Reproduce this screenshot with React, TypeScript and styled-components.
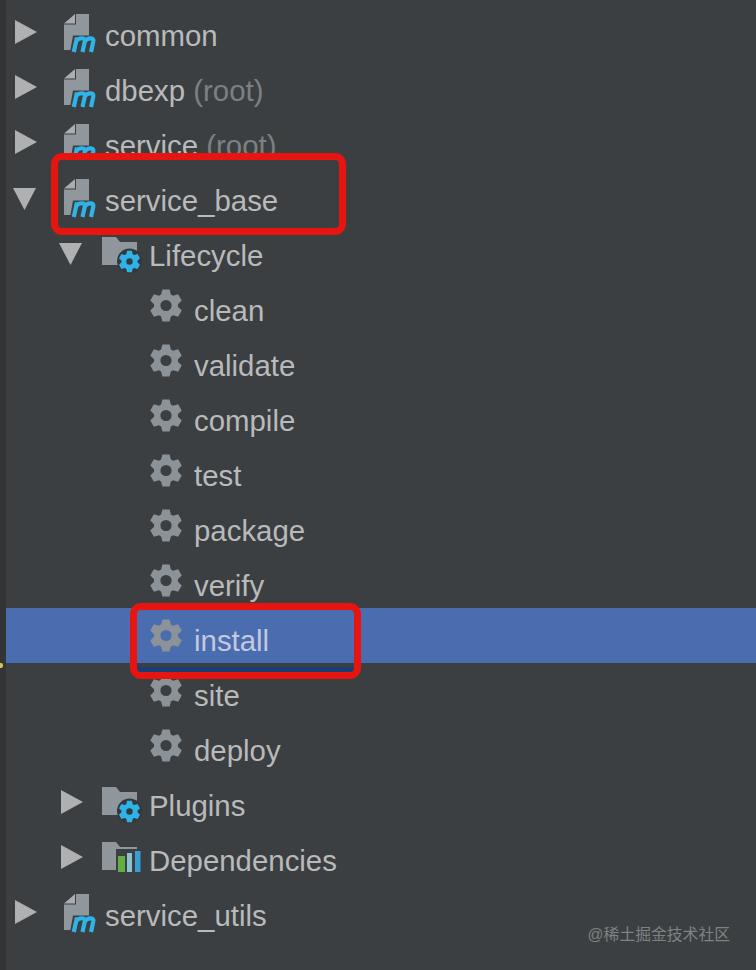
import React from "react";
import styled, { createGlobalStyle } from "styled-components";

const Global = createGlobalStyle`
  html, body { margin: 0; padding: 0; background: #3c3f41; }
  body { width: 756px; height: 970px; overflow: hidden; }
`;

const Page = styled.div`
  position: relative;
  display: flex;
  width: 756px;
  height: 970px;
  overflow: hidden;
  background: #3c3f41;
  font-family: "Liberation Sans", Arial, sans-serif;
`;

const Gutter = styled.div`
  position: relative;
  flex: 0 0 6px;
  background: #323436;
`;

const CaretMark = styled.span`
  position: absolute;
  left: 0;
  top: 663px;
  width: 3px;
  height: 5px;
  border-radius: 0 2px 2px 0;
  background: #d8c25a;
`;

const Tree = styled.div`
  flex: 1;
  display: flex;
  flex-direction: column;
  padding-top: 3px;
`;

const Row = styled.div<{ $indent: number; $selected?: boolean }>`
  position: relative;
  display: flex;
  align-items: center;
  flex: 0 0 55px;
  height: 55px;
  padding-left: ${(p) => p.$indent}px;
  background: ${(p) => (p.$selected ? "#4a6db0" : "transparent")};
`;

const BoxedRow = styled(Row)`
  z-index: 1;
  &::before {
    content: "";
    position: absolute;
    z-index: -1;
    box-sizing: border-box;
    border: 7px solid #e8140f;
    border-radius: 11px;
  }
`;

const ModuleBox = styled(BoxedRow)`
  &::before {
    left: 45px;
    top: -15px;
    width: 295px;
    height: 82px;
    background: #3c3f41;
  }
`;

const SelectedBox = styled(BoxedRow)`
  &::before {
    left: 124px;
    top: -5px;
    width: 231px;
    height: 76px;
    background: linear-gradient(transparent calc(100% - 5px), #163f78 0) padding-box;
  }
`;

const Arrow = styled.svg`
  flex: 0 0 auto;
  display: block;
  width: 24px;
  height: 26px;
  margin-top: 3px;
`;

const IconSlot = styled.div<{ $left: number; $width: number; $drop: number }>`
  flex: 0 0 ${(p) => p.$width}px;
  margin-left: ${(p) => p.$left}px;
  margin-top: ${(p) => p.$drop}px;
  display: flex;
  align-items: center;
  justify-content: flex-start;
`;

const IconSvg = styled.svg`
  display: block;
  overflow: visible;
`;

const Label = styled.span<{ $gap: number; $selected?: boolean }>`
  margin-left: ${(p) => p.$gap}px;
  padding-top: 11px;
  font-size: 29.4px;
  line-height: 36px;
  white-space: nowrap;
  color: ${(p) => (p.$selected ? "#c3c8dc" : "#b8babb")};
`;

const Muted = styled.span`
  color: #7d8082;
`;

const Watermark = styled.div`
  position: absolute;
  right: 26px;
  top: 923px;
  font-family: "Liberation Sans", "Noto Sans CJK SC", sans-serif;
  font-size: 15.8px;
  line-height: 24px;
  color: #7f8284;
`;

function gearPath(cx: number, cy: number, rOut: number, rIn: number, rHole: number) {
  const pts: string[] = [];
  for (let i = 0; i < 6; i++) {
    const a = ((i * 60 - 90) * Math.PI) / 180;
    const offsets: [number, number][] = [
      [rIn, -0.42],
      [rOut, -0.22],
      [rOut, 0.22],
      [rIn, 0.42],
    ];
    for (const [r, d] of offsets) {
      pts.push(`${(cx + r * Math.cos(a + d)).toFixed(2)} ${(cy + r * Math.sin(a + d)).toFixed(2)}`);
    }
  }
  const hole = `M${cx - rHole} ${cy}a${rHole} ${rHole} 0 1 0 ${rHole * 2} 0a${rHole} ${rHole} 0 1 0 ${-rHole * 2} 0Z`;
  return `M${pts.join("L")}Z${hole}`;
}

const ArrowRight = () => (
  <Arrow viewBox="0 0 24 26">
    <path d="M0 1L22 13L0 25Z" fill="#aeb0b2" />
  </Arrow>
);

const ArrowDown = () => (
  <Arrow viewBox="0 0 24 26">
    <path d="M0 4L23 4L11.5 26Z" fill="#aeb0b2" />
  </Arrow>
);

const MavenIcon = () => (
  <IconSvg width="33" height="38" viewBox="0 0 33 38">
    <path d="M12 0H25V36H0V10.5H12Z" fill="#90989e" />
    <path d="M0 9.5L11 0V9.5Z" fill="#a9aeb1" />
    <path d="M9 21.5H33V38H6Z" fill="#3c3f41" />
    <path
      d="M9.8 38L13 23.5M12.4 27C14.5 23.5 22 23 20.8 27.5L18.5 38M20.8 27.5C23 23.5 30.5 23 29.3 27.5L27 38"
      fill="none"
      stroke="#2fb4ea"
      strokeWidth="4.2"
    />
  </IconSvg>
);

const Folder = () => <path d="M0 0H14L18 5H35V28H0Z" fill="#8f979d" />;

const FolderGearIcon = () => (
  <IconSvg width="38" height="36" viewBox="0 0 38 36">
    <Folder />
    <circle cx="27.5" cy="24" r="12.5" fill="#34383b" />
    <path d={gearPath(27.5, 24.5, 11, 8, 3.2)} fill="#2fb2e8" fillRule="evenodd" />
  </IconSvg>
);

const FolderChartIcon = () => (
  <IconSvg width="38" height="36" viewBox="0 0 38 36">
    <Folder />
    <path d="M14 7H38V36H14Z" fill="#3c3f41" />
    <rect x="16" y="14" width="7" height="16" fill="#5fb03f" />
    <rect x="25" y="11" width="5" height="19" fill="#8fbfd0" />
    <rect x="33" y="9" width="5.5" height="21" fill="#389fd6" />
  </IconSvg>
);

const GearIcon = () => (
  <IconSvg width="32" height="33" viewBox="0 0 32 33">
    <path d={gearPath(16, 16.5, 16.5, 12, 5.6)} fill="#8b9399" fillRule="evenodd" />
  </IconSvg>
);

const Module = ({ open, name, note }: { open?: boolean; name: string; note?: string }) => (
  <>
    {open ? <ArrowDown /> : <ArrowRight />}
    <IconSlot $left={open ? 27 : 25} $width={33} $drop={5}>
      <MavenIcon />
    </IconSlot>
    <Label $gap={8}>
      {name}
      {note ? <Muted> {note}</Muted> : null}
    </Label>
  </>
);

const Group = ({ open, name, chart }: { open?: boolean; name: string; chart?: boolean }) => (
  <>
    {open ? <ArrowDown /> : <ArrowRight />}
    <IconSlot $left={open ? 19 : 17} $width={38} $drop={9}>
      {chart ? <FolderChartIcon /> : <FolderGearIcon />}
    </IconSlot>
    <Label $gap={9}>{name}</Label>
  </>
);

const Goal = ({ name, selected }: { name: string; selected?: boolean }) => (
  <>
    <IconSlot $left={0} $width={32} $drop={0}>
      <GearIcon />
    </IconSlot>
    <Label $gap={12} $selected={selected}>
      {name}
    </Label>
  </>
);

export default function App() {
  return (
    <Page>
      <Global />
      <Gutter>
        <CaretMark />
      </Gutter>
      <Tree>
        <Row $indent={9}><Module name="common" /></Row>
        <Row $indent={9}><Module name="dbexp" note="(root)" /></Row>
        <Row $indent={9}><Module name="service" note="(root)" /></Row>
        <ModuleBox $indent={7}><Module open name="service_base" /></ModuleBox>
        <Row $indent={53}><Group open name="Lifecycle" /></Row>
        <Row $indent={144}><Goal name="clean" /></Row>
        <Row $indent={144}><Goal name="validate" /></Row>
        <Row $indent={144}><Goal name="compile" /></Row>
        <Row $indent={144}><Goal name="test" /></Row>
        <Row $indent={144}><Goal name="package" /></Row>
        <Row $indent={144}><Goal name="verify" /></Row>
        <SelectedBox $indent={144} $selected><Goal name="install" selected /></SelectedBox>
        <Row $indent={144}><Goal name="site" /></Row>
        <Row $indent={144}><Goal name="deploy" /></Row>
        <Row $indent={55}><Group name="Plugins" /></Row>
        <Row $indent={55}><Group name="Dependencies" chart /></Row>
        <Row $indent={9}><Module name="service_utils" /></Row>
      </Tree>
      <Watermark>@稀土掘金技术社区</Watermark>
    </Page>
  );
}
